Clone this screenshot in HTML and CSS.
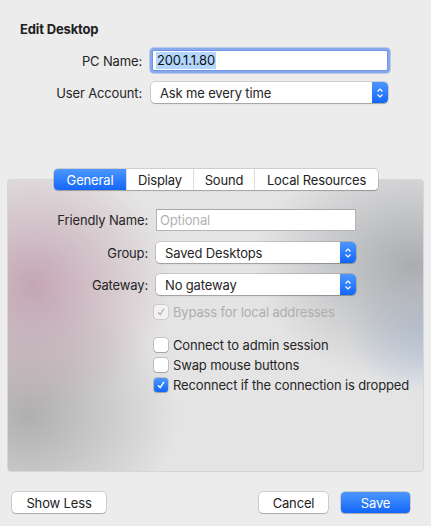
FILE: index.html
```html
<!DOCTYPE html>
<html>
<head>
<meta charset="utf-8">
<link rel="stylesheet" href="styles.css">
</head>
<body>
<div class="window">
  <div class="title">Edit Desktop</div>
  <div class="form top">
    <div class="lbl">PC Name:</div>
    <div class="field focus"><span class="sel">200.1.1.80</span></div>
    <div class="lbl">User Account:</div>
    <div class="popup wide"><span class="ptext">Ask me every time</span><span class="stepper"><svg width="8" height="12" viewBox="0 0 8 12"><path d="M1.5 4.5 L4 2 L6.5 4.5 M1.5 7.5 L4 10 L6.5 7.5" fill="none" stroke="#fff" stroke-width="1.2"/></svg></span></div>
  </div>
  <div class="tabbox">
    <div class="segmented">
      <span class="seg active s1">General</span>
      <span class="seg s2">Display</span>
      <span class="seg s3">Sound</span>
      <span class="seg s4">Local Resources</span>
    </div>
    <div class="form inner">
      <div class="lbl">Friendly Name:</div>
      <div class="field text"><span class="ph">Optional</span></div>
      <div class="lbl">Group:</div>
      <div class="popup"><span class="ptext">Saved Desktops</span><span class="stepper"><svg width="8" height="12" viewBox="0 0 8 12"><path d="M1.5 4.5 L4 2 L6.5 4.5 M1.5 7.5 L4 10 L6.5 7.5" fill="none" stroke="#fff" stroke-width="1.2"/></svg></span></div>
      <div class="lbl">Gateway:</div>
      <div class="popup"><span class="ptext">No gateway</span><span class="stepper"><svg width="8" height="12" viewBox="0 0 8 12"><path d="M1.5 4.5 L4 2 L6.5 4.5 M1.5 7.5 L4 10 L6.5 7.5" fill="none" stroke="#fff" stroke-width="1.2"/></svg></span></div>
    </div>
    <div class="checks">
      <div class="chk disabled bypass"><span class="box"><svg width="10" height="10" viewBox="0 0 10 10"><path d="M2 5.2 L4.2 7.6 L8 1.8" fill="none" stroke="#b5b5b5" stroke-width="1.4"/></svg></span><span>Bypass for local addresses</span></div>
      <div class="chk gap"><span class="box"></span><span>Connect to admin session</span></div>
      <div class="chk"><span class="box"></span><span>Swap mouse buttons</span></div>
      <div class="chk"><span class="box on"><svg width="10" height="10" viewBox="0 0 10 10"><path d="M2 5.2 L4.2 7.6 L8 1.8" fill="none" stroke="#fff" stroke-width="1.4"/></svg></span><span>Reconnect if the connection is dropped</span></div>
    </div>
  </div>
  <div class="buttons">
    <span class="btn showless">Show Less</span>
    <span class="spacer"></span>
    <span class="btn cancel">Cancel</span>
    <span class="btn primary">Save</span>
  </div>
</div>
</body>
</html>
```

FILE: styles.css
```css
* { box-sizing: border-box; }
html, body { margin: 0; padding: 0; }
body {
  width: 431px;
  height: 526px;
  background: #ececec;
  font-family: Inter, "Liberation Sans", sans-serif;
  font-size: 13px;
  letter-spacing: -0.15px;
  color: #262626;
  overflow: hidden;
}
.window {
  display: flex;
  flex-direction: column;
  padding: 21px 0 0 0;
}
.title {
  font-weight: 700;
  line-height: 16px;
  margin-left: 20px;
  color: #222;
}
.form {
  display: grid;
  align-items: center;
}
.form.top {
  margin-top: 13px;
  grid-template-columns: 142px 237px;
  column-gap: 9px;
  row-gap: 11px;
}
.lbl {
  text-align: right;
  line-height: 16px;
}
.field {
  height: 21px;
  background: #fff;
  display: flex;
  align-items: center;
  padding-left: 3px;
}
.field.focus {
  margin-left: 1px;
  width: 236px;
  border: 1px solid #6f96de;
  box-shadow: 0 0 0 2px #87a9ec, 0 0 0 3px rgba(135,169,236,0.5);
  border-radius: 2px;
}
.sel {
  background: #b3d7ff;
  color: #111;
  line-height: 17px;
  padding: 0 1px;
}
.popup {
  height: 21px;
  width: 200px;
  background: #fff;
  border-radius: 4px;
  box-shadow: 0 0 0 0.5px rgba(0,0,0,0.25), 0 1px 1px rgba(0,0,0,0.2);
  display: flex;
  align-items: center;
  justify-content: space-between;
  padding-left: 9px;
  overflow: hidden;
}
.popup.wide { width: 237px; }
.ptext { line-height: 16px; }
.stepper {
  width: 16px;
  height: 21px;
  background: linear-gradient(#4c97fe, #1366f9);
  display: flex;
  align-items: center;
  justify-content: center;
  border-radius: 0 4px 4px 0;
}
.tabbox {
  margin: 76px 7px 0 7px;
  height: 293px;
  border: 1px solid #d6d6d6;
  border-radius: 4px;
  background:
    radial-gradient(ellipse 140px 130px at 25px 105px, rgba(190,155,170,0.85), rgba(190,155,170,0) 100%),
    radial-gradient(ellipse 150px 130px at 20px 235px, rgba(172,172,172,0.95), rgba(172,172,172,0) 100%),
    radial-gradient(ellipse 160px 120px at 405px 85px, rgba(170,172,176,1), rgba(170,172,176,0) 100%),
    radial-gradient(ellipse 80px 65px at 420px 150px, rgba(185,202,228,1), rgba(185,202,228,0) 100%),
    #e4e4e4;
  display: flex;
  flex-direction: column;
}
.segmented {
  align-self: center;
  margin-top: -11px;
  margin-left: 1px;
  display: flex;
  height: 21px;
  background: #fff;
  border-radius: 4px;
  box-shadow: 0 0 0 0.5px rgba(0,0,0,0.25), 0 1px 1px rgba(0,0,0,0.18);
  overflow: hidden;
}
.seg {
  display: flex;
  align-items: center;
  justify-content: center;
  line-height: 16px;
  border-left: 1px solid #dcdcdc;
  color: #222;
}
.seg.s1 { width: 72px; border-left: none; }
.seg.s2 { width: 67px; }
.seg.s3 { width: 61px; }
.seg.s4 { width: 124px; }
.seg.active {
  background: linear-gradient(#4c97fe, #1366f9);
  color: #fff;
}
.form.inner {
  margin-top: 19px;
  grid-template-columns: 140px 200px;
  column-gap: 8px;
  row-gap: 11px;
}
.field.text {
  height: 22px;
  border: 1px solid #b4b4b4;
  border-top-color: #a8a8a8;
  padding-left: 3px;
}
.ph { color: #b3b3b3; line-height: 16px; }
.checks {
  margin-top: 7px;
  margin-left: 146px;
  display: flex;
  flex-direction: column;
}
.chk {
  display: flex;
  align-items: center;
  height: 20px;
  gap: 5px;
  line-height: 16px;
}
.chk.gap { margin-top: 13px; }
.box {
  width: 14px;
  height: 14px;
  border-radius: 3px;
  background: #fff;
  box-shadow: 0 0 0 0.5px rgba(0,0,0,0.3), 0 1px 1px rgba(0,0,0,0.15);
  display: flex;
  align-items: center;
  justify-content: center;
  flex: none;
}
.box.on {
  background: linear-gradient(#4c97fe, #1366f9);
}
.chk.disabled { color: #aeaeae; }
.chk.disabled .box { background: #f2f2f2; box-shadow: 0 0 0 0.5px rgba(0,0,0,0.18); }
.buttons {
  display: flex;
  margin: 20px 21px 0 12px;
  gap: 13px;
}
.spacer { flex: 1; }
.btn {
  height: 21px;
  display: flex;
  align-items: center;
  justify-content: center;
  background: #fff;
  border-radius: 4px;
  box-shadow: 0 0 0 0.5px rgba(0,0,0,0.25), 0 1px 1px rgba(0,0,0,0.18);
  line-height: 16px;
  color: #222;
}
.btn.showless { width: 94px; }
.btn.cancel { width: 69px; }
.btn.primary {
  width: 69px;
  background: linear-gradient(#4c97fe, #1366f9);
  color: #fff;
}
```
